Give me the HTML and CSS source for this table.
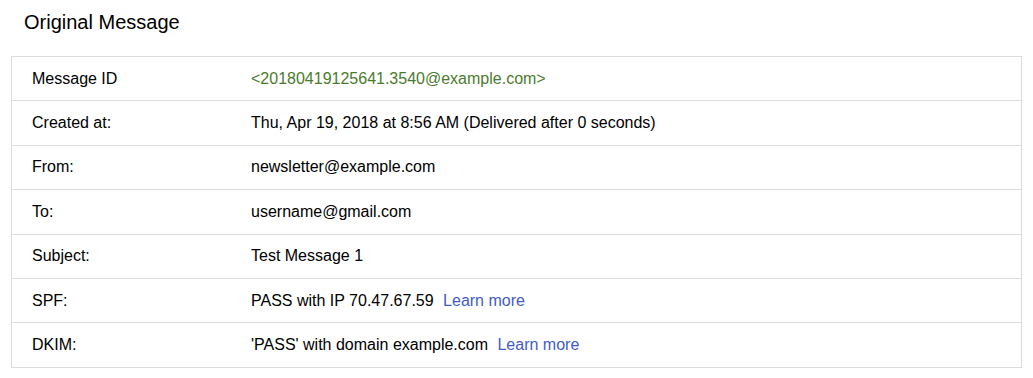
FILE: index.html
```html
<!DOCTYPE html>
<html>
<head>
<meta charset="utf-8">
<link rel="stylesheet" href="styles.css">
</head>
<body>
<div class="page">
  <h1 class="title">Original Message</h1>
  <div class="table">
    <div class="row"><div class="label">Message ID</div><div class="value msgid">&lt;20180419125641.3540@example.com&gt;</div></div>
    <div class="row"><div class="label">Created at:</div><div class="value">Thu, Apr 19, 2018 at 8:56 AM (Delivered after 0 seconds)</div></div>
    <div class="row"><div class="label">From:</div><div class="value">newsletter@example.com</div></div>
    <div class="row"><div class="label">To:</div><div class="value">username@gmail.com</div></div>
    <div class="row"><div class="label">Subject:</div><div class="value">Test Message 1</div></div>
    <div class="row"><div class="label">SPF:</div><div class="value">PASS with IP 70.47.67.59 <a class="link" href="#">Learn more</a></div></div>
    <div class="row"><div class="label">DKIM:</div><div class="value">'PASS' with domain example.com <a class="link" href="#">Learn more</a></div></div>
  </div>
</div>
</body>
</html>
```
FILE: styles.css
```css
html, body {
  margin: 0;
  padding: 0;
  background: #fff;
}
body {
  font-family: "Liberation Sans", Arial, sans-serif;
  color: #222;
}
.page {
  padding: 0 11px 0 11px;
  width: 1011px;
}
.title {
  margin: 0;
  padding: 10px 0 0 13px;
  height: 56px;
  box-sizing: border-box;
  font-size: 20px;
  font-weight: normal;
  line-height: 24px;
  color: #000;
}
.table {
  border: 1px solid #dcdcdc;
  width: 1011px;
  box-sizing: border-box;
}
.row {
  display: grid;
  grid-template-columns: 219px 1fr;
  height: 43.4px;
  align-items: center;
  font-size: 16px;
  color: #000;
}
.row + .row {
  border-top: 1px solid #dcdcdc;
}
.label, .value {
  padding: 0 20px;
}
.msgid {
  color: #4b7b2e;
}
.link {
  color: #3f5ccb;
  text-decoration: none;
  margin-left: 5px;
}
```
